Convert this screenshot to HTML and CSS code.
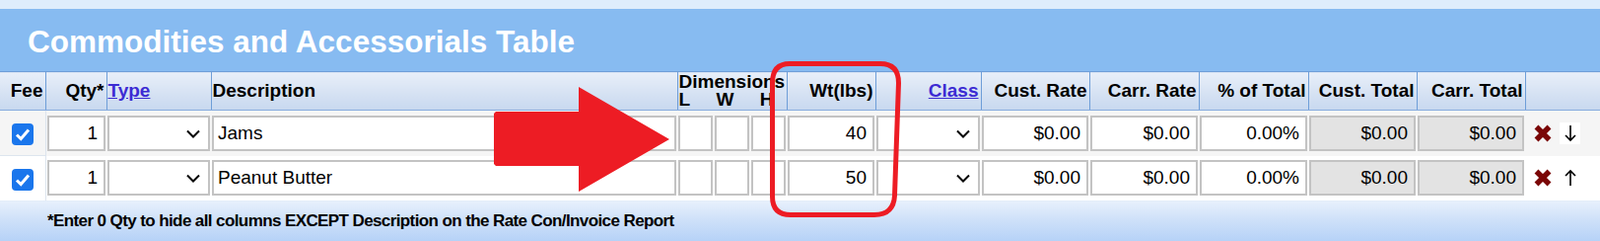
FILE: index.html
```html
<!DOCTYPE html>
<html lang="en">
<head>
  <meta charset="UTF-8" />
  <meta name="viewport" content="width=device-width, initial-scale=1.0"/>
  <title>Commodities and Accessorials</title>
  <link rel="stylesheet" href="styles.css">
</head>
<body>

  <div class="top-strip"></div>

  <section class="panel">
    <h1 class="panel-title">Commodities and Accessorials Table</h1>

    <table class="grid">
      <colgroup>
        <col style="width:46px">
        <col style="width:62px">
        <col style="width:106px">
        <col style="width:473px">
        <col style="width:111px">
        <col style="width:90px">
        <col style="width:107px">
        <col style="width:110px">
        <col style="width:111px">
        <col style="width:111px">
        <col style="width:110px">
        <col style="width:110px">
        <col style="width:76px">
      </colgroup>
      <thead>
        <tr>
          <th>Fee</th>
          <th>Qty*</th>
          <th class="left"><a href="#">Type</a></th>
          <th class="left">Description</th>
          <th class="left dims">
            Dimensions
            <div class="dim-labels"><span>L</span><span>W</span><span>H</span></div>
          </th>
          <th>Wt(lbs)</th>
          <th><a href="#">Class</a></th>
          <th>Cust. Rate</th>
          <th>Carr. Rate</th>
          <th>% of Total</th>
          <th>Cust. Total</th>
          <th>Carr. Total</th>
          <th></th>
        </tr>
      </thead>
      <tbody>
        <tr class="odd">
          <td class="fee"><span class="check"><svg width="22" height="22" viewBox="0 0 22 22"><path d="M5 11.5 L9.2 15.5 L17 6.5" /></svg></span></td>
          <td><input class="field num" type="text" value="1"></td>
          <td><div class="pick"><svg width="14" height="9" viewBox="0 0 14 9"><path d="M1 1.5 L7 7.5 L13 1.5" /></svg></div></td>
          <td><input class="field" type="text" value="Jams"></td>
          <td>
            <div class="dim-inputs">
              <input class="field" type="text">
              <input class="field" type="text">
              <input class="field" type="text">
            </div>
          </td>
          <td><input class="field num" type="text" value="40"></td>
          <td><div class="pick"><svg width="14" height="9" viewBox="0 0 14 9"><path d="M1 1.5 L7 7.5 L13 1.5" /></svg></div></td>
          <td><input class="field num" type="text" value="$0.00"></td>
          <td><input class="field num" type="text" value="$0.00"></td>
          <td><input class="field num" type="text" value="0.00%"></td>
          <td><input class="field num locked" type="text" value="$0.00" readonly></td>
          <td><input class="field num locked" type="text" value="$0.00" readonly></td>
          <td>
            <div class="row-actions">
              <svg class="del" width="20" height="20" viewBox="0 0 20 20"><path d="M3.5 3.5 L16.5 16.5 M16.5 3.5 L3.5 16.5" /></svg>
              <span class="move boxed"><svg width="14" height="18" viewBox="0 0 14 18"><path d="M7 1 V16 M2 11 L7 16 L12 11" /></svg></span>
            </div>
          </td>
        </tr>
        <tr>
          <td class="fee"><span class="check"><svg width="22" height="22" viewBox="0 0 22 22"><path d="M5 11.5 L9.2 15.5 L17 6.5" /></svg></span></td>
          <td><input class="field num" type="text" value="1"></td>
          <td><div class="pick"><svg width="14" height="9" viewBox="0 0 14 9"><path d="M1 1.5 L7 7.5 L13 1.5" /></svg></div></td>
          <td><input class="field" type="text" value="Peanut Butter"></td>
          <td>
            <div class="dim-inputs">
              <input class="field" type="text">
              <input class="field" type="text">
              <input class="field" type="text">
            </div>
          </td>
          <td><input class="field num" type="text" value="50"></td>
          <td><div class="pick"><svg width="14" height="9" viewBox="0 0 14 9"><path d="M1 1.5 L7 7.5 L13 1.5" /></svg></div></td>
          <td><input class="field num" type="text" value="$0.00"></td>
          <td><input class="field num" type="text" value="$0.00"></td>
          <td><input class="field num" type="text" value="0.00%"></td>
          <td><input class="field num locked" type="text" value="$0.00" readonly></td>
          <td><input class="field num locked" type="text" value="$0.00" readonly></td>
          <td>
            <div class="row-actions">
              <svg class="del" width="20" height="20" viewBox="0 0 20 20"><path d="M3.5 3.5 L16.5 16.5 M16.5 3.5 L3.5 16.5" /></svg>
              <span class="move"><svg width="14" height="18" viewBox="0 0 14 18"><path d="M7 17 V2 M2 7 L7 2 L12 7" /></svg></span>
            </div>
          </td>
        </tr>
      </tbody>
    </table>

    <div class="grid-note">*Enter 0 Qty to hide all columns EXCEPT Description on the Rate Con/Invoice Report</div>
  </section>

  <!-- annotation drawn over the screenshot -->
  <svg class="marks" width="1623" height="244" viewBox="0 0 1623 244">
    <polygon class="mark-arrow" points="503,113 587,113 587,88 679,141 587,194 587,168 503,168 501,166 501,115" />
    <path class="mark-box" d="M801 64.5 L893 64.5 Q911.5 64.5 911.5 84 L907.5 198 Q906.5 217.5 887 217.5 L802 217.5 Q783.5 217.5 783.5 199 L783.5 84 Q783.5 64.5 801 64.5 Z" />
  </svg>

</body>
</html>
```

FILE: styles.css
```css
body {
  margin: 0;
  font-family: "Liberation Sans", Arial, sans-serif;
  background: #ffffff;
  color: #000;
  width: 1623px;
  overflow: hidden;
}

.top-strip {
  height: 9px;
  background-color: #deedfc;
}

.panel-title {
  margin: 0;
  height: 63px;
  box-sizing: border-box;
  padding: 3px 0 0 28px;
  display: flex;
  align-items: center;
  background-color: #87bbf1;
  color: white;
  font-size: 31.5px;
  font-weight: bold;
}

table.grid {
  width: 1623px;
  table-layout: fixed;
  border-collapse: collapse;
}

.grid th {
  height: 39px;
  padding: 0 2px 0 1px;
  box-sizing: border-box;
  text-align: right;
  vertical-align: middle;
  font-size: 19px;
  font-weight: bold;
  white-space: nowrap;
  background: linear-gradient(to bottom, #e8eff9, #d6e2f3 55%, #c7d8ef);
  border: 1px solid #6e9ed8;
  border-bottom-color: #86acdf;
}

.grid th:first-child {
  border-left: none;
}

.grid th:last-child {
  border-right: none;
}

.grid th.left {
  text-align: left;
}

.grid th a {
  color: #3c2bd3;
  text-decoration: underline;
}

.grid th.dims {
  line-height: 18px;
  overflow: visible;
}

.dim-labels {
  display: flex;
  justify-content: space-between;
  width: 96px;
}

.grid td {
  height: 45px;
  padding: 0 1px;
  vertical-align: middle;
}

.grid tr.odd td {
  background-color: #f5f5f5;
}

.grid tbody tr:last-child td {
  border-bottom: 1px solid #e3edf9;
}

.grid td.fee {
  text-align: center;
  border-right: 1px solid #dde5ee;
  border-bottom: 1px solid #dde5ee;
  padding: 0;
}

.check {
  display: inline-flex;
  width: 22px;
  height: 22px;
  margin-top: 2px;
  border-radius: 4px;
  background-color: #1a76ec;
  vertical-align: middle;
}

.check path {
  fill: none;
  stroke: white;
  stroke-width: 3;
}

.field {
  display: block;
  width: 100%;
  height: 36px;
  box-sizing: border-box;
  margin: 0;
  padding: 0 4px;
  border: 2px solid #c3c3c3;
  background: white;
  font-family: "Liberation Sans", Arial, sans-serif;
  font-size: 19px;
  color: #000;
  outline: none;
}

.field.num {
  text-align: right;
  padding-right: 6px;
}

.field.locked {
  background-color: #e3e3e3;
}

.dim-inputs {
  display: flex;
  gap: 2px;
}

.dim-inputs .field {
  flex: 1;
  min-width: 0;
}

.pick {
  height: 36px;
  box-sizing: border-box;
  border: 2px solid #c3c3c3;
  background: white;
  display: flex;
  align-items: center;
  justify-content: flex-end;
  padding: 1px 8px 0 0;
}

.pick path {
  fill: none;
  stroke: #000;
  stroke-width: 2;
}

.row-actions {
  display: flex;
  align-items: center;
  gap: 7px;
  padding-left: 7px;
}

.del path {
  fill: none;
  stroke: #7a0606;
  stroke-width: 5.5;
}

.move {
  width: 21px;
  height: 22px;
  display: flex;
  align-items: center;
  justify-content: center;
}

.move.boxed {
  background-color: white;
}

.move path {
  fill: none;
  stroke: #000;
  stroke-width: 1.6;
}

.grid-note {
  height: 41px;
  box-sizing: border-box;
  padding-left: 48px;
  line-height: 40px;
  font-size: 17px;
  font-weight: bold;
  letter-spacing: -0.6px;
  background: linear-gradient(to bottom, #e7f0fc, #cfe1f9 45%, #b6d2f7);
  border-bottom: 1px solid #8fb4e6;
}

.marks {
  position: absolute;
  left: 0;
  top: 0;
  pointer-events: none;
}

.mark-arrow {
  fill: #ed1c24;
}

.mark-box {
  fill: none;
  stroke: #ed1c24;
  stroke-width: 5;
}
```
